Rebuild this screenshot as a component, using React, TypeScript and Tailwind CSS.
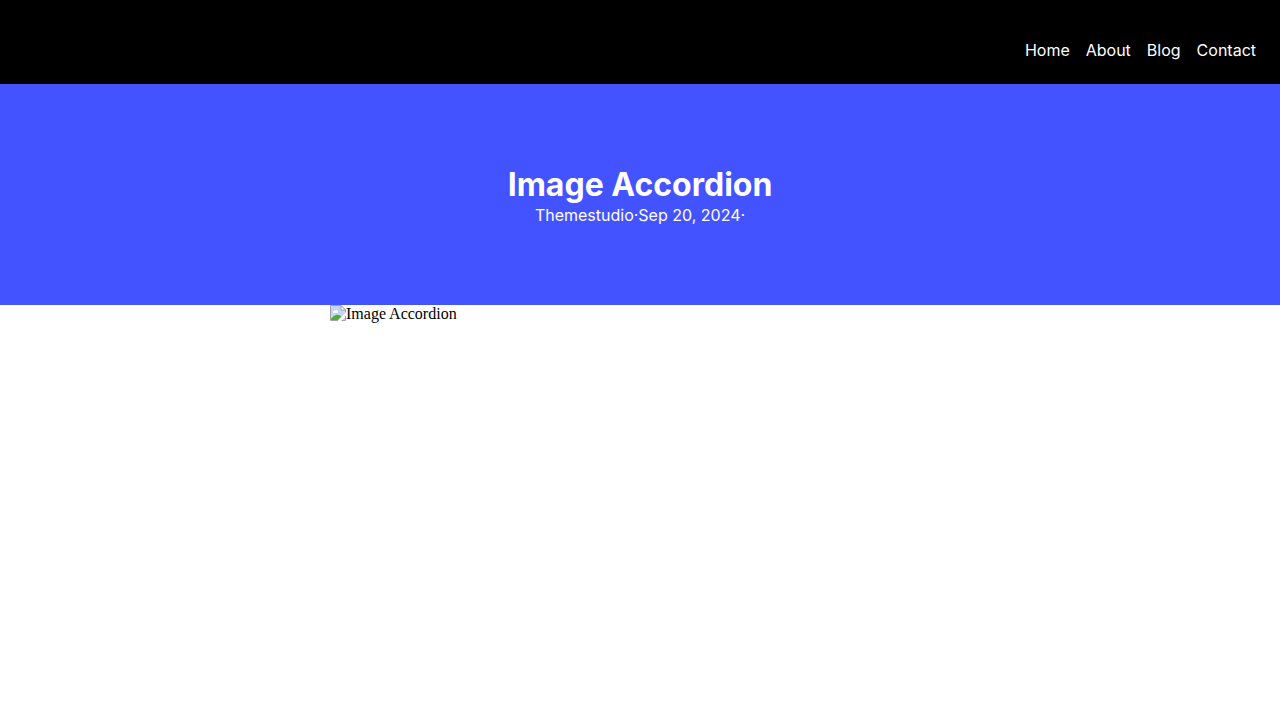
import React from 'react';

const navLinks = ['Home', 'About', 'Blog', 'Contact'];

const BrokenImageIcon: React.FC = () => (
  <svg width="16" height="16" viewBox="0 0 16 16" className="shrink-0" aria-hidden="true">
    <path d="M1 1H11V5H15V8L8 15H1Z" fill="#c3d5f8" />
    <path d="M3 7.5a1.5 1.5 0 0 1 1.5-1.8 1.8 1.8 0 0 1 3.2 0.4A1.2 1.2 0 0 1 7.5 8H3.5Z" fill="#ffffff" />
    <path d="M1 15V14C3 11.5 5 9.8 7.5 9.8C9 9.8 10.5 10.8 11.5 11.5L8 15Z" fill="#4fae34" />
    <path d="M8 15.5H0.5V0.5H11L15.5 5V7.5" fill="none" stroke="#a3a3a3" />
    <path d="M11 0.5V5H15.5Z" fill="#ffffff" stroke="#a3a3a3" />
    <path d="M15.5 11V15.5H11.5" fill="none" stroke="#a3a3a3" />
    <path d="M12 15L15 12V15Z" fill="#c3d5f8" />
  </svg>
);

const App: React.FC = () => {
  return (
    <div className="min-h-screen bg-white">
      <header className="bg-black px-6 pt-10 pb-6 font-['Inter',sans-serif]">
        <nav>
          <ul className="flex justify-end gap-4">
            {navLinks.map((label) => (
              <li key={label} className="leading-5">
                <a href="#" className="text-base leading-5 text-white">{label}</a>
              </li>
            ))}
          </ul>
        </nav>
      </header>

      <main>
        <section className="bg-[#4353ff] px-6 pt-[81px] pb-20 text-center font-['Inter',sans-serif] text-white">
          <h1 className="text-[32px] leading-10 font-bold">Image Accordion</h1>
          <p className="text-base leading-5">Themestudio·Sep 20, 2024·</p>
        </section>

        <figure className="mx-auto flex w-full max-w-[620px] items-start">
          <BrokenImageIcon />
          <figcaption className="font-['Liberation_Serif',serif] text-base leading-[18px] text-black">
            Image Accordion
          </figcaption>
        </figure>
      </main>
    </div>
  );
};

export default App;
